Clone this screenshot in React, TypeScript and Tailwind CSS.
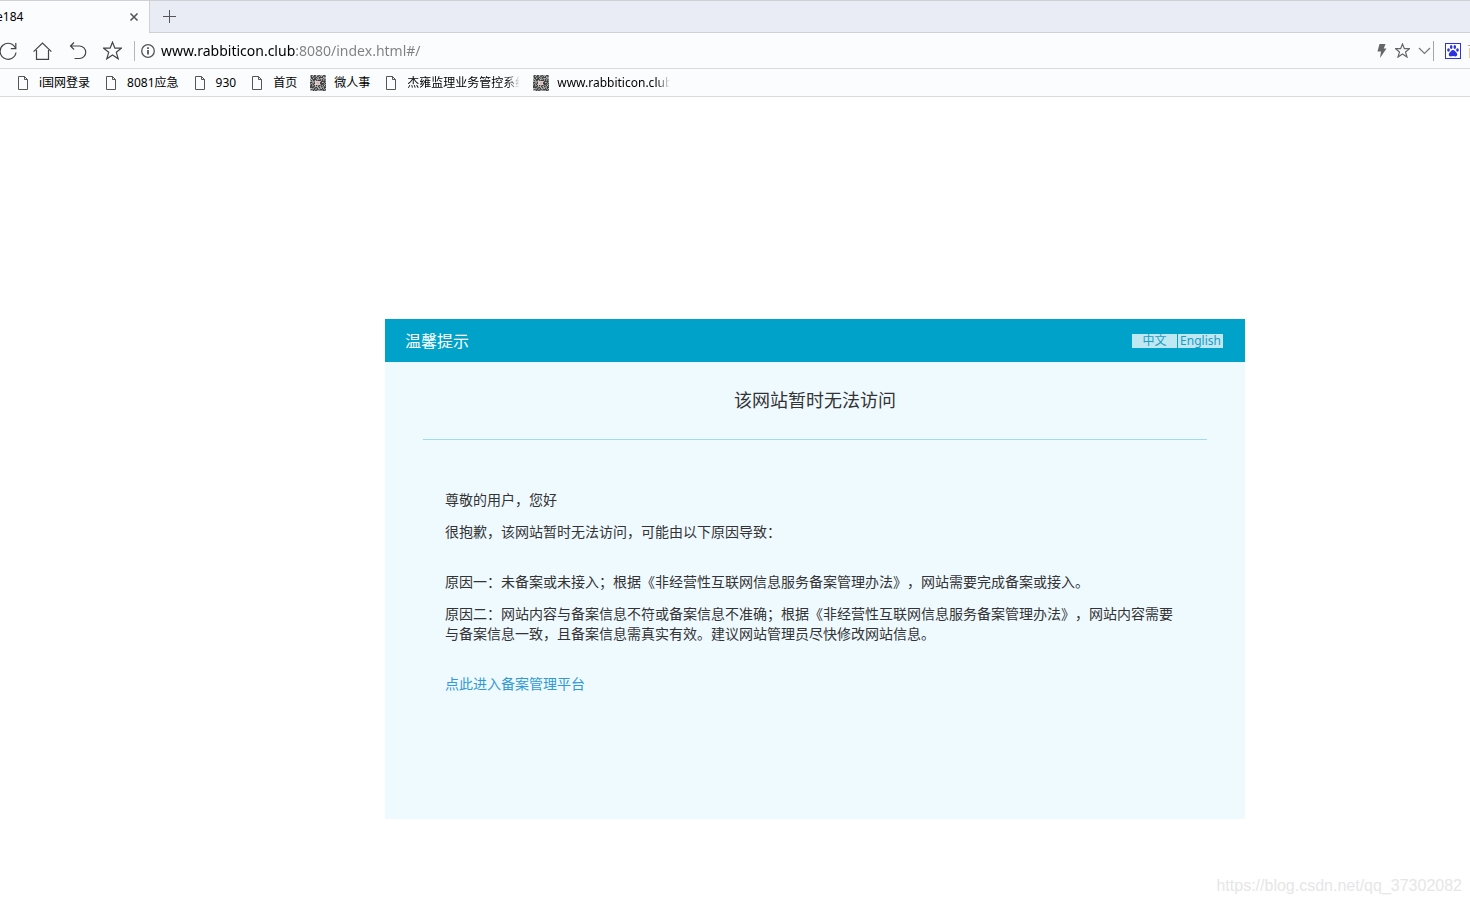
import { useState } from "react";
import type { ReactNode } from "react";

type Lang = "zh" | "en";

type Bookmark = {
  title: string;
  icon: "file" | "code";
};

const BOOKMARKS: Bookmark[] = [
  { title: "i国网登录", icon: "file" },
  { title: "8081应急", icon: "file" },
  { title: "930", icon: "file" },
  { title: "首页", icon: "file" },
  { title: "微人事", icon: "code" },
  { title: "杰雍监理业务管控系统", icon: "file" },
  { title: "www.rabbiticon.club", icon: "code" },
];

const STAR =
  "M9.5 1.2l2.4 6h6.4l-5 4.1 1.9 6.5-5.7-3.9-5.7 3.9 1.9-6.5-5-4.1h6.4z";

function FileIcon() {
  return (
    <svg width="16" height="16" viewBox="0 0 16 16" fill="none" stroke="#555" className="shrink-0">
      <path d="M3.5 1.5h6l3 3v10h-9z" />
      <path d="M9.5 1.5v3h3" />
    </svg>
  );
}

const GREYS = ["#3c3c3c", "#6b6b6b", "#8d8d8d", "#555555", "#b9b9b9", "#474747", "#9c9c9c"];

// 小程序码样式的 favicon
function CodeIcon() {
  const cells: ReactNode[] = [];
  let seed = 7;
  for (let y = 0; y < 16; y++) {
    for (let x = 0; x < 16; x++) {
      seed = (seed * 1103 + 12345) % 65521;
      const center = x > 4 && x < 10 && y > 5 && y < 10;
      cells.push(
        <rect
          key={`${x}-${y}`}
          x={x}
          y={y}
          width="1"
          height="1"
          fill={center ? "#d9cfcf" : GREYS[seed % GREYS.length]}
        />
      );
    }
  }
  return (
    <svg width="16" height="16" viewBox="0 0 16 16" shapeRendering="crispEdges" className="shrink-0">
      {cells}
      <rect x="7" y="7" width="2" height="2" fill="#eba9a4" />
    </svg>
  );
}

function TabStrip() {
  return (
    <div className="flex h-[33px] bg-[#e9ecf5]">
      <div className="flex w-[150px] items-center justify-between border-t border-r border-[#cfcfd6] bg-[#fbfcfe] pr-[10px]">
        <span className="-ml-1 text-xs">e184</span>
        <button aria-label="关闭标签页" className="cursor-pointer">
          <svg width="10" height="10" viewBox="0 0 10 10" stroke="#555" strokeWidth="1.6">
            <path d="M1.5 1.5l7 7M8.5 1.5l-7 7" />
          </svg>
        </button>
      </div>
      <button
        aria-label="新建标签页"
        className="flex flex-1 cursor-pointer items-center border-t border-b border-[#cfcfd6] pl-[13px]"
      >
        <svg width="13" height="13" viewBox="0 0 13 13" stroke="#555">
          <path d="M6.5 0v13M0 6.5h13" />
        </svg>
      </button>
    </div>
  );
}

function AddressBar() {
  const [url, setUrl] = useState("www.rabbiticon.club:8080/index.html#/");

  return (
    <div className="flex h-9 items-center overflow-hidden border-b border-[#d9d9de] bg-[#fbfcfe]">
      <button aria-label="刷新" className="shrink-0 cursor-pointer">
        <svg width="17" height="20" viewBox="0 0 17 20" fill="none" stroke="#444" strokeWidth="1.2">
          <path d="M15.6 7.5A8 8 0 1 0 16 11.5" />
          <path d="M15.8 2v5.6h-5" />
        </svg>
      </button>
      <button aria-label="主页" className="ml-4 shrink-0 cursor-pointer">
        <svg width="19" height="20" viewBox="0 0 19 20" fill="none" stroke="#444" strokeWidth="1.2">
          <path d="M.6 10.6L9.5 2l8.9 8.6M3.5 9v9.4h12V9" />
        </svg>
      </button>
      <button aria-label="后退" className="ml-4 shrink-0 cursor-pointer">
        <svg width="19" height="20" viewBox="0 0 19 20" fill="none" stroke="#444" strokeWidth="1.2">
          <path d="M6 1.5L2.5 5l3.5 3.5M2.5 5h9a6.2 6.2 0 0 1 0 12.5h-5" />
        </svg>
      </button>
      <button aria-label="收藏" className="ml-4 shrink-0 cursor-pointer">
        <svg width="19" height="19" viewBox="0 0 19 19" fill="none" stroke="#444" strokeWidth="1.2">
          <path d={STAR} />
        </svg>
      </button>
      <div className="ml-3 h-5 w-px shrink-0 bg-[#b5b5ba]" />
      <svg width="14" height="14" viewBox="0 0 14 14" fill="none" stroke="#555" strokeWidth="1.3" className="ml-1.5 shrink-0">
        <circle cx="7" cy="7" r="6.3" />
        <path d="M7 6v4.5M7 3.3v1.6" strokeWidth="1.8" />
      </svg>
      <input
        aria-label="地址栏"
        value={url}
        onChange={(e) => setUrl(e.target.value)}
        className="ml-1.5 h-6 min-w-0 flex-1 bg-[linear-gradient(to_right,#000_134px,#808080_134px)] bg-clip-text text-sm text-transparent caret-black outline-none"
      />
      <button aria-label="极速模式" className="shrink-0 cursor-pointer">
        <svg width="10" height="14" viewBox="0 0 10 14" fill="#666">
          <path d="M2.5 0h6L6.8 4.5h2.7L3 14l1-6.5H.5z" />
        </svg>
      </button>
      <button aria-label="添加收藏" className="ml-2 shrink-0 cursor-pointer">
        <svg width="15" height="15" viewBox="0 0 19 19" fill="none" stroke="#666" strokeWidth="1.5">
          <path d={STAR} />
        </svg>
      </button>
      <button aria-label="展开" className="ml-2 shrink-0 cursor-pointer">
        <svg width="13" height="8" viewBox="0 0 13 8" fill="none" stroke="#777" strokeWidth="1.2">
          <path d="M1 1l5.5 5.5L12 1" />
        </svg>
      </button>
      <div className="ml-0.5 h-5 w-px shrink-0 bg-[#a5a5aa]" />
      <button aria-label="百度搜索" className="ml-[11px] shrink-0 cursor-pointer">
        <svg width="16" height="16" viewBox="0 0 16 16" fill="#2b32e0">
          <rect x=".5" y=".5" width="15" height="15" fill="#fff" stroke="#2b32e0" />
          <ellipse cx="3.5" cy="7" rx="1.3" ry="1.8" />
          <ellipse cx="6.2" cy="4" rx="1.3" ry="1.9" />
          <ellipse cx="9.8" cy="4" rx="1.3" ry="1.9" />
          <ellipse cx="12.5" cy="7" rx="1.3" ry="1.8" />
          <path d="M8 7c1.800 0 2.300 1.700 3.300 2.600 1.400 1.200 1.200 3.800-.8 3.800-1 0-1.500-.3-2.500-.3s-1.500.3-2.500.3c-2 0-2.200-2.600-.8-3.800C5.700 8.700 6.200 7 8 7z" />
        </svg>
      </button>
      <input
        aria-label="搜索"
        placeholder="百度"
        className="ml-1.5 h-5 w-[3px] shrink-0 text-sm outline-none placeholder:text-[#aaa]"
      />
    </div>
  );
}

function BookmarkBar() {
  return (
    <nav className="flex h-7 items-center gap-[13px] border-b border-[#d9d9de] bg-[#fbfcfe] pl-[15px]">
      {BOOKMARKS.map((item) => (
        <a key={item.title} href="#/" className="flex items-center gap-2 text-xs text-black">
          {item.icon === "file" ? <FileIcon /> : <CodeIcon />}
          <span
            className={
              item.title.length > 8
                ? "w-[113px] overflow-hidden whitespace-nowrap mask-[linear-gradient(to_right,#000_88%,transparent)]"
                : "whitespace-nowrap"
            }
          >
            {item.title}
          </span>
        </a>
      ))}
    </nav>
  );
}

function NoticeCard() {
  const [, setLang] = useState<Lang>("zh");

  return (
    <section className="min-h-[500px] w-[860px] bg-[#eefaff] text-sm leading-5 text-[#333] [text-spacing-trim:space-all]">
      <header className="flex h-[43px] items-center justify-between bg-[#00a2ca] pr-[22px] pl-5">
        <h1 className="text-base text-white">温馨提示</h1>
        <div className="flex gap-px text-xs leading-[14px] text-[#1a9cc4]">
          <button onClick={() => setLang("zh")} className="h-[14px] w-[45px] cursor-pointer bg-[#bfe8f2]">
            中文
          </button>
          <button onClick={() => setLang("en")} className="h-[14px] w-[45px] cursor-pointer bg-[#bfe8f2]">
            English
          </button>
        </div>
      </header>
      <h2 className="mx-[38px] border-b border-[#a3dbee] pt-6 pb-[25px] text-center text-lg leading-7">
        该网站暂时无法访问
      </h2>
      <div className="px-[60px] pt-[50px]">
        <p>尊敬的用户，您好</p>
        <p className="mt-3">很抱歉，该网站暂时无法访问，可能由以下原因导致：</p>
        <p className="mt-[30px]">
          原因一：未备案或未接入；根据《非经营性互联网信息服务备案管理办法》，网站需要完成备案或接入。
        </p>
        <p className="mt-3">
          原因二：网站内容与备案信息不符或备案信息不准确；根据《非经营性互联网信息服务备案管理办法》，网站内容需要与备案信息一致，且备案信息需真实有效。建议网站管理员尽快修改网站信息。
        </p>
        <a href="#/" className="mt-[30px] inline-block text-[#3399d5]">
          点此进入备案管理平台
        </a>
      </div>
    </section>
  );
}

export default function App() {
  return (
    <div
      lang="zh-CN"
      className="relative min-h-screen overflow-hidden bg-white font-['Noto_Sans','Noto_Sans_CJK_SC',sans-serif] text-black"
    >
      <TabStrip />
      <AddressBar />
      <BookmarkBar />
      <main className="flex justify-center pt-[222px] pl-40">
        <NoticeCard />
      </main>
      <div className="absolute right-2 bottom-1.5 font-['Liberation_Sans',sans-serif] text-base text-[#e6e6e6]">
        https://blog.csdn.net/qq_37302082
      </div>
    </div>
  );
}
